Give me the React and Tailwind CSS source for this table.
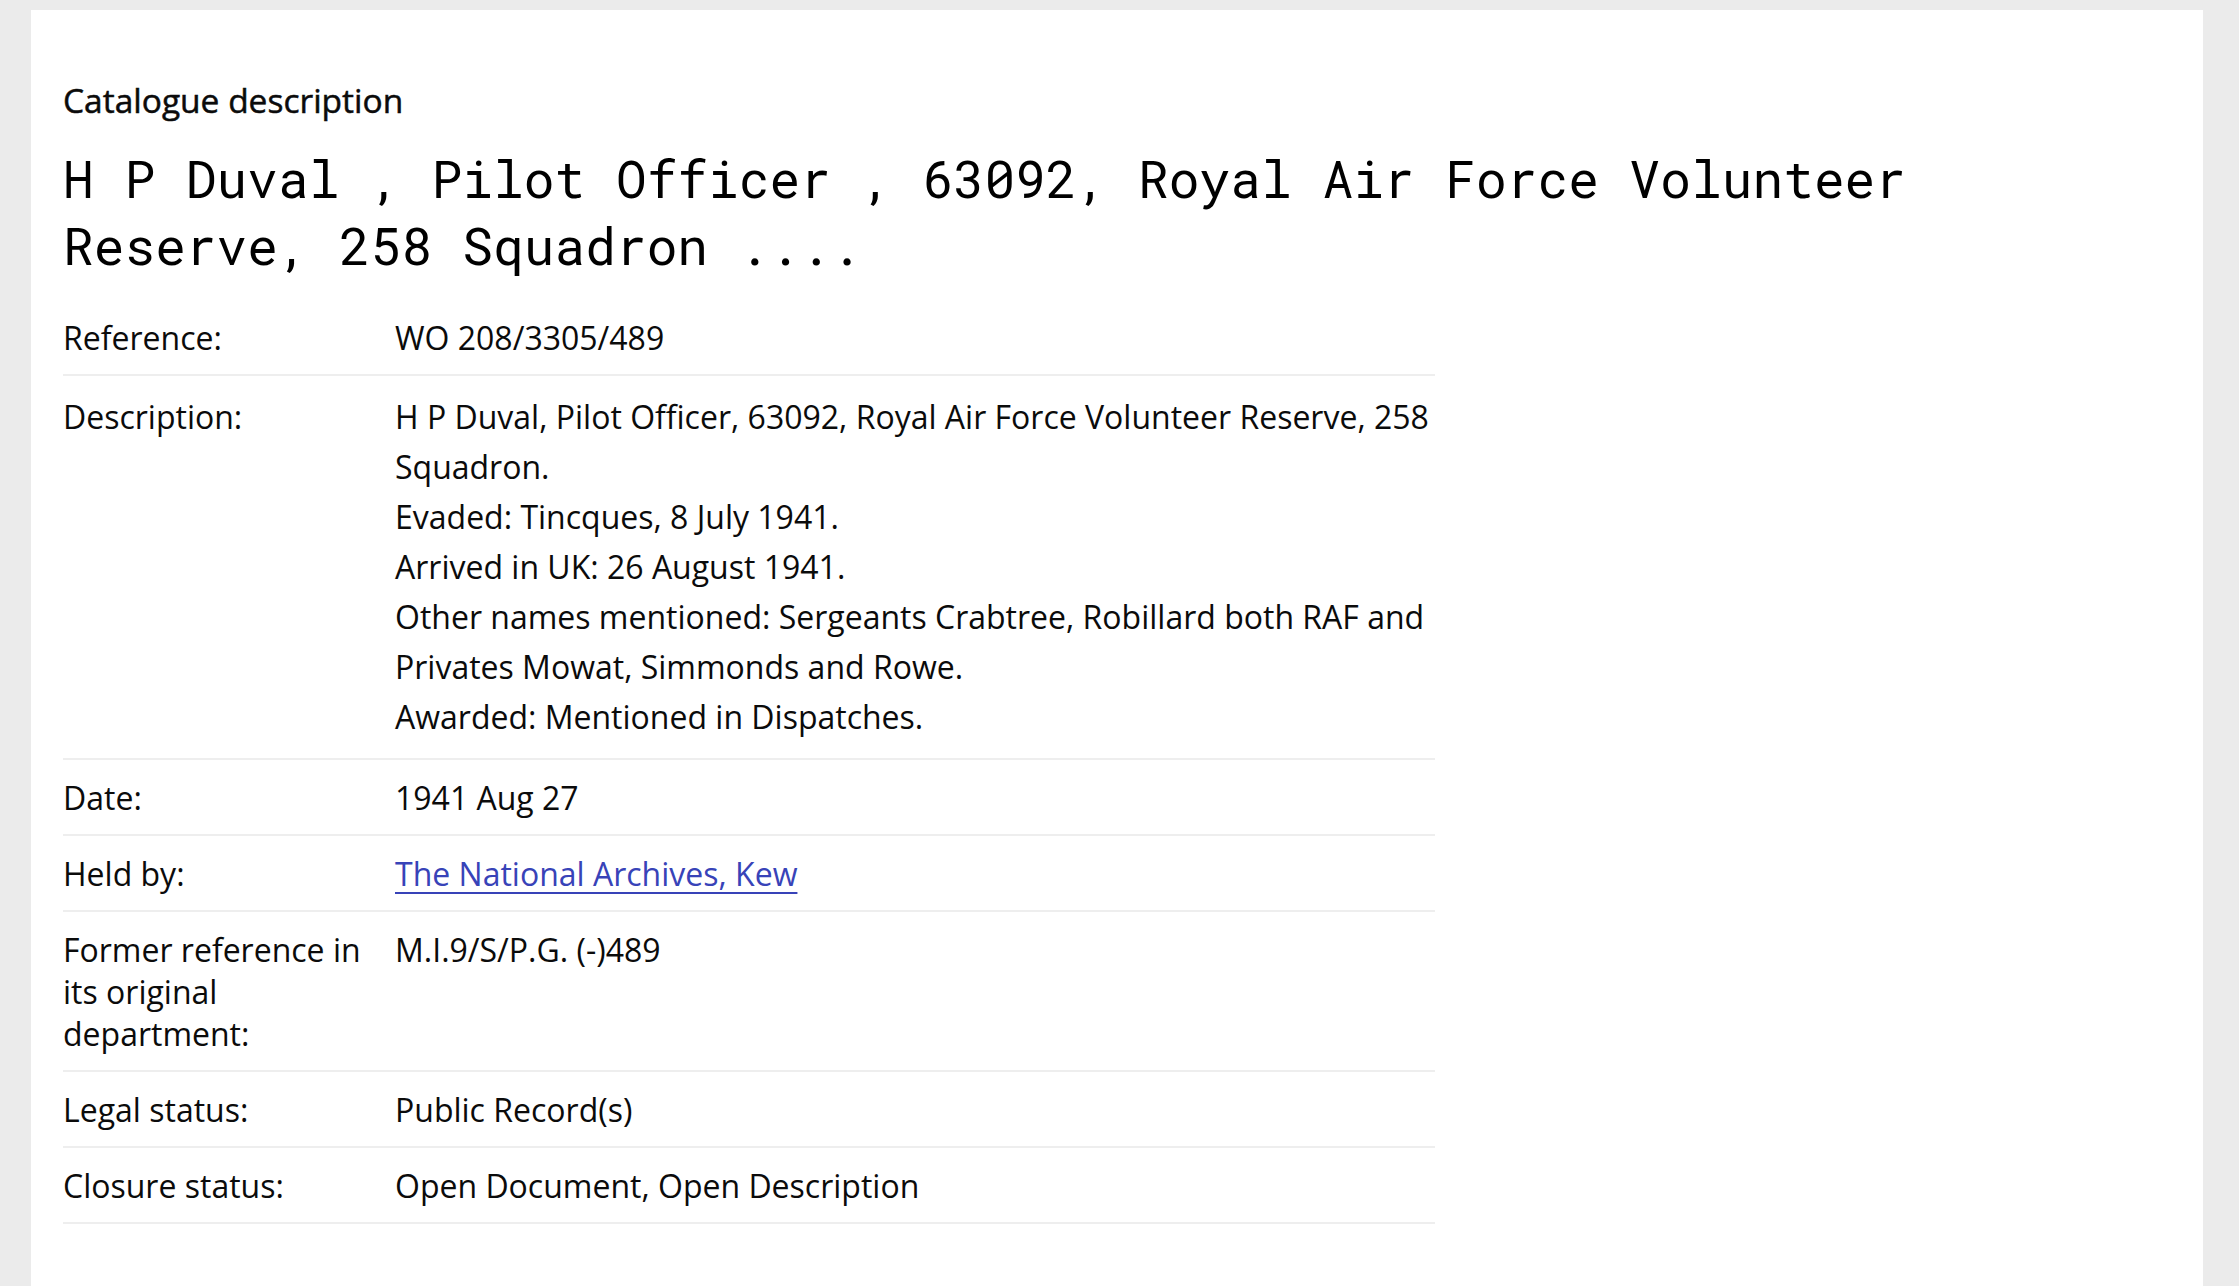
import React from 'react';

const rows = [
  { label: 'Reference:', value: 'WO 208/3305/489' },
  {
    label: 'Description:',
    lines: [
      'H P Duval, Pilot Officer, 63092, Royal Air Force Volunteer Reserve, 258 Squadron.',
      'Evaded: Tincques, 8 July 1941.',
      'Arrived in UK: 26 August 1941.',
      'Other names mentioned: Sergeants Crabtree, Robillard both RAF and Privates Mowat, Simmonds and Rowe.',
      'Awarded: Mentioned in Dispatches.',
    ],
  },
  { label: 'Date:', value: '1941 Aug 27' },
  { label: 'Held by:', link: 'The National Archives, Kew' },
  { label: 'Former reference in its original department:', value: 'M.I.9/S/P.G. (-)489' },
  { label: 'Legal status:', value: 'Public Record(s)' },
  { label: 'Closure status:', value: 'Open Document, Open Description' },
];

const Row = ({ row, first }) => {
  // description row sits a touch lower than the single-line rows
  const pt = first ? 'pt-0' : row.lines ? 'pt-[16px]' : 'pt-[13px]';
  return (
    <div className={`flex items-baseline border-b-2 border-[#eeeeee] pb-[11px] ${pt}`}>
      <div className="w-[332px] shrink-0 pr-[20px] pb-[4px] leading-[42px]">{row.label}</div>
      <div className="flex-1 leading-[50px]">
        {row.lines && (
          <div className="pb-[5px]">
            {row.lines.map((l) => (
              <div key={l}>{l}</div>
            ))}
          </div>
        )}
        {row.value}
        {row.link && (
          <a href="#" className="text-[#3843b8] underline decoration-2 underline-offset-[6px]">
            {row.link}
          </a>
        )}
      </div>
    </div>
  );
};

export default function App() {
  return (
    <div className="min-h-screen bg-[#ebebeb] pl-[31px] pr-[36px] pt-[10px]">
      <div className="min-h-[1276px] bg-white px-[32px] pt-[70px] text-[#0b0b0b] [font-family:'Open_Sans',sans-serif]">
        <h2 className="text-[33.5px] font-normal leading-[40px] [-webkit-text-stroke:0.5px_#0b0b0b]">
          Catalogue description
        </h2>
        <h1 className="mt-[25px] text-[51.2px] leading-[67px] text-black [font-family:'Roboto_Mono','DejaVu_Sans_Mono',monospace]">
          H P Duval , Pilot Officer , 63092, Royal Air Force Volunteer Reserve, 258 Squadron ....
        </h1>
        <div className="mt-[34px] w-[1372px] text-[32px]">
          {rows.map((r, i) => (
            <Row key={r.label} row={r} first={i === 0} />
          ))}
        </div>
      </div>
    </div>
  );
}
